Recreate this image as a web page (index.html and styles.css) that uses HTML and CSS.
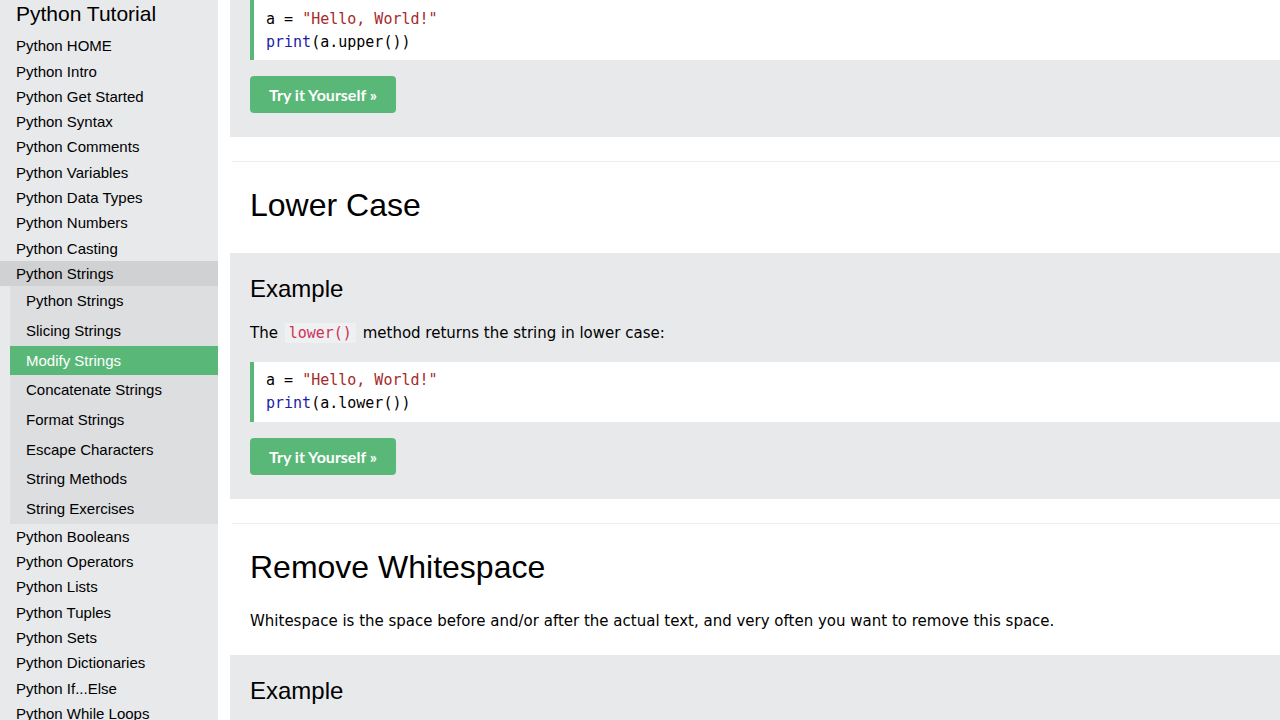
FILE: index.html
```html
<!DOCTYPE html>
<html lang="en">
<head>
<meta charset="utf-8">
<title>Python - Modify Strings</title>
<link rel="stylesheet" href="styles.css">
</head>
<body>
<div class="page">
  <nav class="sidebar">
    <h2 class="side-title">Python Tutorial</h2>
    <a class="side-link">Python HOME</a>
    <a class="side-link">Python Intro</a>
    <a class="side-link">Python Get Started</a>
    <a class="side-link">Python Syntax</a>
    <a class="side-link">Python Comments</a>
    <a class="side-link">Python Variables</a>
    <a class="side-link">Python Data Types</a>
    <a class="side-link">Python Numbers</a>
    <a class="side-link">Python Casting</a>
    <a class="side-link side-open">Python Strings</a>
    <div class="side-sub">
      <a class="sub-link">Python Strings</a>
      <a class="sub-link">Slicing Strings</a>
      <a class="sub-link sub-active">Modify Strings</a>
      <a class="sub-link">Concatenate Strings</a>
      <a class="sub-link">Format Strings</a>
      <a class="sub-link">Escape Characters</a>
      <a class="sub-link">String Methods</a>
      <a class="sub-link">String Exercises</a>
    </div>
    <a class="side-link">Python Booleans</a>
    <a class="side-link">Python Operators</a>
    <a class="side-link">Python Lists</a>
    <a class="side-link">Python Tuples</a>
    <a class="side-link">Python Sets</a>
    <a class="side-link">Python Dictionaries</a>
    <a class="side-link">Python If...Else</a>
    <a class="side-link">Python While Loops</a>
  </nav>

  <main class="main">
    <div class="example example-clipped">
      <div class="code"><span class="plain">a = </span><span class="str">"Hello, World!"</span><br><span class="kw">print</span><span class="plain">(a.upper())</span></div>
      <a class="try-btn">Try it Yourself »</a>
    </div>

    <hr class="sep">

    <h2 class="section-title">Lower Case</h2>

    <div class="example">
      <h3 class="example-title">Example</h3>
      <p class="example-text">The <code class="inline-code">lower()</code> method returns the string in lower case:</p>
      <div class="code"><span class="plain">a = </span><span class="str">"Hello, World!"</span><br><span class="kw">print</span><span class="plain">(a.lower())</span></div>
      <a class="try-btn">Try it Yourself »</a>
    </div>

    <hr class="sep">

    <h2 class="section-title">Remove Whitespace</h2>
    <p class="intro">Whitespace is the space before and/or after the actual text, and very often you want to remove this space.</p>

    <div class="example">
      <h3 class="example-title">Example</h3>
    </div>
  </main>
</div>
</body>
</html>
```

FILE: styles.css
```css
* {
  box-sizing: border-box;
}

html, body {
  margin: 0;
  padding: 0;
  background: #ffffff;
  color: #000000;
  overflow: hidden;
}

.page {
  display: flex;
  align-items: flex-start;
  width: 1280px;
  height: 720px;
  overflow: hidden;
}

/* Sidebar */
.sidebar {
  width: 218px;
  flex: 0 0 218px;
  height: 720px;
  overflow: hidden;
  background: #e7e9eb;
  display: flex;
  flex-direction: column;
  font-family: "Liberation Sans", Arial, sans-serif;
  font-size: 15px;
}

.sidebar > * {
  flex-shrink: 0;
}

.side-title {
  margin: 0;
  padding: 1px 16px 0;
  font-size: 21px;
  font-weight: normal;
  line-height: 26px;
  height: 33.3px;
}

.side-link {
  display: block;
  padding: 0 16px;
  line-height: 25.3px;
  height: 25.3px;
  color: #000;
  white-space: nowrap;
}

.side-open {
  background: #d0d1d2;
}

.side-sub {
  margin-left: 10px;
  background: #dddee0;
  display: flex;
  flex-direction: column;
}

.sub-link {
  display: block;
  flex-shrink: 0;
  padding: 0 16px;
  line-height: 29.7px;
  height: 29.7px;
  color: #000;
  white-space: nowrap;
}

.sub-active {
  background: #59b878;
  color: #ffffff;
}

/* Main */
.main {
  flex: 1;
  margin-left: 12px;
  display: flex;
  flex-direction: column;
  min-width: 0;
}

.main > * {
  flex-shrink: 0;
}

.example {
  background: #e7e9eb;
  padding: 10px 0 24px 20px;
  margin-top: 29px;
  display: flex;
  flex-direction: column;
  align-items: flex-start;
}

.example-clipped {
  margin-top: 0;
  padding-top: 0;
}

.example-title {
  margin: 11px 0 0;
  font-family: "Liberation Sans", Arial, sans-serif;
  font-size: 24px;
  font-weight: normal;
  line-height: 29px;
}

.example-text {
  margin: 19px 0 0;
  font-family: "DejaVu Sans", Verdana, sans-serif;
  font-size: 15px;
  line-height: 22.5px;
}

.inline-code {
  font-family: "DejaVu Sans Mono", "Liberation Mono", monospace;
  font-size: 15px;
  color: #d0305a;
  background: #eef0f1;
  padding: 1px 4px;
  margin: 0 2px;
}

.code {
  align-self: stretch;
  margin-top: 17px;
  background: #ffffff;
  border-left: 4px solid #59b878;
  padding: 7px 16px 7px 12px;
  font-family: "DejaVu Sans Mono", "Liberation Mono", monospace;
  font-size: 15px;
  line-height: 23px;
  height: 60px;
}

.example-clipped .code {
  margin-top: 0;
  padding-top: 8px;
}

.plain {
  color: #000000;
}

.str {
  color: #a52a2a;
}

.kw {
  color: #1c1ca8;
}

.try-btn {
  display: inline-block;
  margin-top: 16px;
  width: 146px;
  height: 37px;
  line-height: 37px;
  text-align: center;
  background: #59b878;
  color: #ffffff;
  border-radius: 4px;
  font-family: Lato, "Open Sans", sans-serif;
  font-weight: 700;
  font-size: 16px;
}

.sep {
  margin: 24px 0 0 2px;
  border: none;
  border-top: 1px solid #ececec;
  height: 0;
}

.section-title {
  margin: 24px 0 0 20px;
  font-family: "Liberation Sans", Arial, sans-serif;
  font-size: 32px;
  font-weight: normal;
  line-height: 38px;
}

.intro {
  margin: 24px 0 0 20px;
  font-family: "DejaVu Sans", Verdana, sans-serif;
  font-size: 15px;
  line-height: 22.5px;
}

.intro + .example {
  margin-top: 23px;
}
```
